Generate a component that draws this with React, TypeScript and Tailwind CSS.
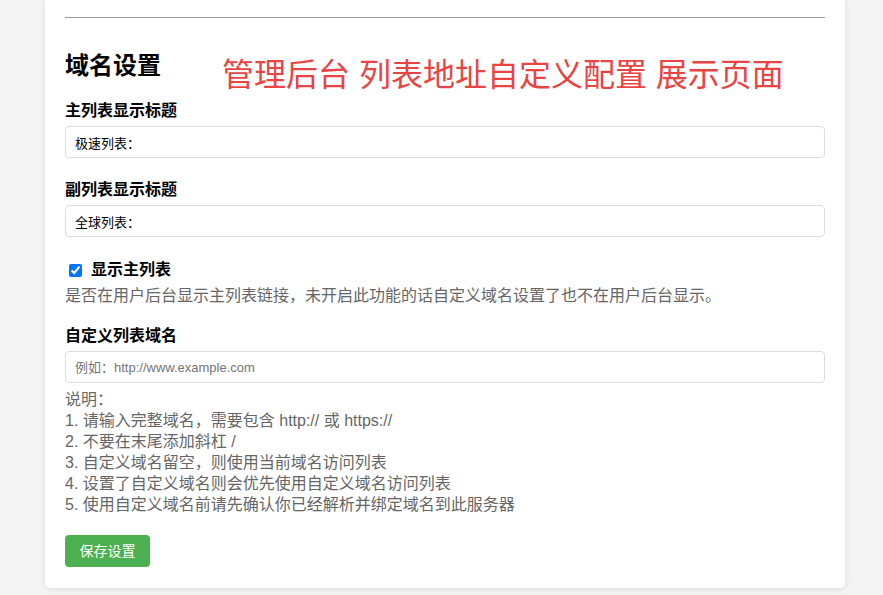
import { useState } from "react";

const FONT = { fontFamily: '"Liberation Sans", "Noto Sans CJK SC", sans-serif' };

const NOTES = [
  "说明：",
  "1. 请输入完整域名，需要包含 http:// 或 https://",
  "2. 不要在末尾添加斜杠 /",
  "3. 自定义域名留空，则使用当前域名访问列表",
  "4. 设置了自定义域名则会优先使用自定义域名访问列表",
  "5. 使用自定义域名前请先确认你已经解析并绑定域名到此服务器",
];

function TextField(props: {
  label: string;
  value: string;
  placeholder?: string;
  setValue: (value: string) => void;
  className?: string;
}) {
  const { label, value, placeholder, setValue, className } = props;
  return (
    <div className={className}>
      <label className="block text-[16px] leading-[22px] font-bold text-black">
        {label}
      </label>
      <input
        style={FONT}
        className="mt-[4px] block w-full h-[32px] border border-[#ddd] rounded-[4px] pl-[9px] text-[13px] text-black placeholder:text-[#757575] bg-white outline-none"
        value={value}
        placeholder={placeholder}
        onChange={(event) => setValue(event.target.value)}
      />
    </div>
  );
}

export default function App() {
  const [mainTitle, setMainTitle] = useState("极速列表：");
  const [subTitle, setSubTitle] = useState("全球列表：");
  const [showMain, setShowMain] = useState(true);
  const [domain, setDomain] = useState("");

  return (
    <div style={FONT} className="min-h-[595px] w-full bg-[#f4f4f4] overflow-hidden">
      <div className="relative ml-[45px] w-[800px] bg-white rounded-b-[5px] shadow-[0_1px_6px_rgba(0,0,0,0.1)] px-[20px] pt-[17px] pb-[21px]">
        <div className="border-t border-[#999]" />

        <h2 className="mt-[34px] text-[24px] leading-[28px] font-bold text-black">
          域名设置
        </h2>

        {/* annotation laid over the form */}
        <div className="absolute left-[177px] top-[57px] text-[32px] leading-[37px] text-[#e94444] whitespace-pre">
          管理后台 列表地址自定义配置 展示页面
        </div>

        <TextField
          className="mt-[20px]"
          label="主列表显示标题"
          value={mainTitle}
          setValue={setMainTitle}
        />
        <TextField
          className="mt-[21px]"
          label="副列表显示标题"
          value={subTitle}
          setValue={setSubTitle}
        />

        <label className="mt-[22px] flex items-center h-[22px]">
          <input
            type="checkbox"
            className="ml-[4px] mr-[9px] w-[13px] h-[13px] accent-[#0075ff]"
            checked={showMain}
            onChange={(event) => setShowMain(event.target.checked)}
          />
          <span className="text-[16px] leading-[22px] font-bold text-black">
            显示主列表
          </span>
        </label>
        <p className="mt-[4px] text-[16px] leading-[22px] text-[#666]">
          是否在用户后台显示主列表链接，未开启此功能的话自定义域名设置了也不在用户后台显示。
        </p>

        <TextField
          className="mt-[18px]"
          label="自定义列表域名"
          value={domain}
          placeholder="例如：http://www.example.com"
          setValue={setDomain}
        />

        <div className="mt-[6px] text-[16px] leading-[21px] text-[#666]">
          {NOTES.map((line) => (
            <div key={line}>{line}</div>
          ))}
        </div>

        <button className="mt-[20px] w-[85px] h-[32px] rounded-[4px] bg-[#4caf50] text-white text-[14px]">
          保存设置
        </button>
      </div>
    </div>
  );
}
